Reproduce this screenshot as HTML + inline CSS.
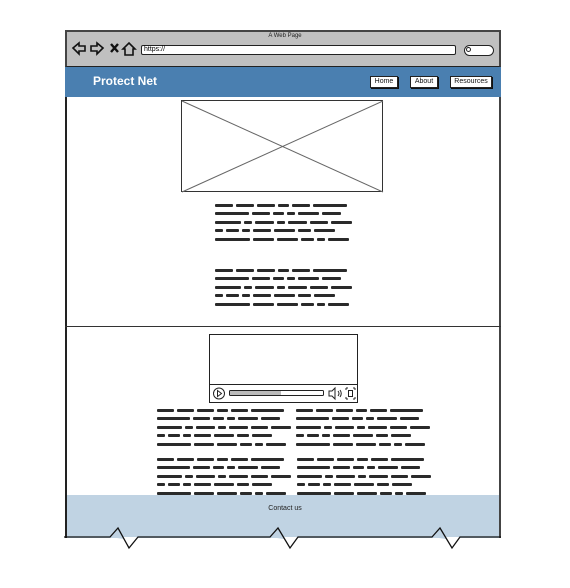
<!DOCTYPE html>
<html><head><meta charset="utf-8"><style>
*{margin:0;padding:0;box-sizing:border-box}
body{width:570px;height:588px;background:#fff;position:relative;overflow:hidden;font-family:"Liberation Sans",sans-serif}
.abs{position:absolute}
.ln{position:absolute;height:3px;display:flex;gap:3px}
.ln i{display:block;height:3px;background:#2a2a2a;border-radius:1px}
.btn{position:absolute;top:76px;height:12px;background:#fff;border:1px solid #222;box-shadow:1px 1px 0 #111;font-size:7px;line-height:10px;text-align:center;color:#111}
</style></head><body>
<div class="abs" style="left:65px;top:30px;width:436px;height:37px;background:#c0c0c0;border:2px solid #444;border-bottom:1px solid #222"></div>
<div class="abs" style="left:0;width:570px;top:33px;text-align:center;font-size:6px;color:#222">A Web Page</div>
<svg class="abs" style="left:70px;top:40px" width="70" height="18" viewBox="0 0 70 18" fill="none" stroke="#111" stroke-width="1.6">
<path d="M3 8 L9 3 L9 6 L15 6 L15 11 L9 11 L9 14 Z"/>
<path d="M33 8 L27 3 L27 6 L21 6 L21 11 L27 11 L27 14 Z"/>
<path d="M41 4 L48 12 M48 4 L41 12" stroke-width="2.4"/>
<path d="M53 9 L59 3 L65 9 L63 9 L63 15 L55 15 L55 9 Z"/>
</svg>
<div class="abs" style="left:141px;top:45px;width:315px;height:10px;background:#fff;border:1px solid #222;border-radius:2px;font-size:7px;line-height:8px;padding-left:2px">https://</div>
<div class="abs" style="left:464px;top:45px;width:30px;height:11px;background:#fff;border:1px solid #222;border-radius:6px"></div>
<div class="abs" style="left:466px;top:47px;width:5px;height:5px;border:1px solid #222;border-radius:50%"></div>
<div class="abs" style="left:65px;top:67px;width:436px;height:30px;background:#4a7fb0"></div>
<div class="abs" style="left:93px;top:74px;color:#fff;font-weight:bold;font-size:12px">Protect Net</div>
<div class="btn" style="left:370px;width:28px">Home</div>
<div class="btn" style="left:410px;width:28px">About</div>
<div class="btn" style="left:450px;width:42px">Resources</div>
<div class="abs" style="left:65px;top:97px;width:436px;height:398px;border-left:2px solid #222;border-right:2px solid #444"></div>
<div class="abs" style="left:65px;top:326px;width:436px;height:1px;background:#333"></div>
<svg class="abs" style="left:181px;top:100px" width="203" height="93"><rect x="0.5" y="0.5" width="201" height="91" fill="#fff" stroke="#333"/><path d="M1 1 L202 92 M202 1 L1 92" stroke="#666"/></svg>
<svg class="abs" style="left:209px;top:334px" width="150" height="70" fill="none" stroke="#222">
<rect x="0.5" y="0.5" width="148" height="68" fill="#fff"/>
<line x1="0" y1="50.5" x2="149" y2="50.5"/>
<circle cx="10" cy="59.5" r="5.5"/>
<path d="M8.5 56.5 L12.5 59.5 L8.5 62.5 Z"/>
<rect x="20.5" y="56.5" width="94" height="5" rx="1"/>
<rect x="21" y="57" width="51" height="4" fill="#bbb" stroke="none"/>
<path d="M120 57 L123 57 L126 54 L126 65 L123 62 L120 62 Z"/>
<path d="M129 57 Q131 59.5 129 62 M131 56 Q133.5 59.5 131 63"/>
<path d="M137 54 L139 54 M137 54 L137 56 M146 54 L144 54 M146 54 L146 56 M137 65 L139 65 M137 65 L137 63 M146 65 L144 65 M146 65 L146 63"/>
<rect x="139.5" y="56.5" width="4" height="6"/>
</svg>
<div id="txt"></div>
<div class="abs" style="left:65px;top:495px;width:436px;height:43px;background:#c0d3e3;border-left:2px solid #222;border-right:2px solid #444"></div>
<div class="abs" style="left:0;width:570px;top:505px;text-align:center;font-size:7px;color:#222">Contact us</div>
<svg class="abs" style="left:0;top:520px" width="570" height="40" fill="none" stroke="#111" stroke-width="1.3">
<path d="M110 17 L118 8 L129 28 L138 17 Z M270 17 L278 8 L290 28 L298 17 Z M432 17 L440 8 L452 28 L460 17 Z" fill="#fff" stroke="none"/>
<path d="M110 17 L118 8 L124 19 Z M270 17 L278 8 L284 19 Z M432 17 L440 8 L446 19 Z" fill="#c0d3e3" stroke="none"/>
<path d="M64 17 L110 17 L118 8 L129 28 L138 17 L270 17 L278 8 L290 28 L298 17 L432 17 L440 8 L452 28 L460 17 L501 17"/>
</svg>
<script>
var P=[[11,11,11,7,11,21],[21,11,7,5,13,12],[16,5,12,5,12,11,13],[5,8,5,11,13,8,13],[22,13,13,8,5,13]];
var out='';
function block(x,y,s){for(var i=0;i<5;i++){out+='<div class="ln" style="left:'+x+'px;top:'+(y+i*8.4)+'px">';P[i].forEach(function(w){out+='<i style="width:'+Math.round(w*s)+'px"></i>'});out+='</div>';}}
block(215,204,1.6);block(215,269,1.6);
block(157,409,1.55);block(296,409,1.55);block(157,458,1.55);block(297,458,1.55);
document.getElementById('txt').innerHTML=out;
</script>
</body></html>
